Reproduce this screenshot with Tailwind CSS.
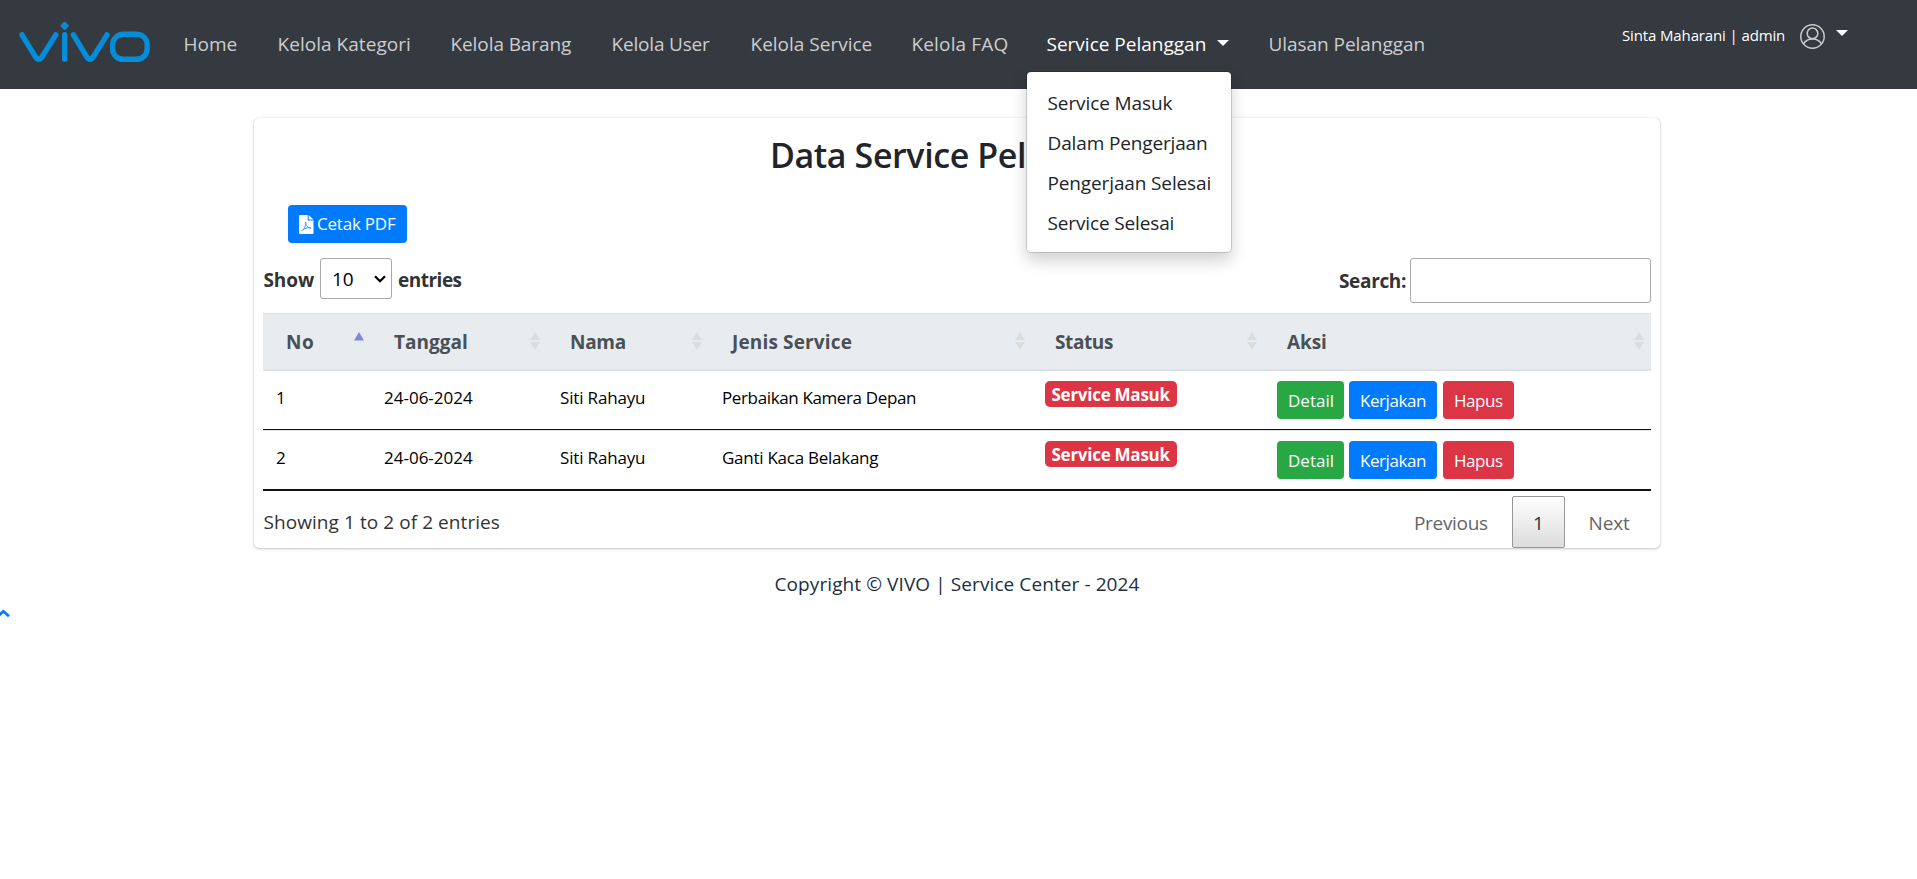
<!DOCTYPE html>
<html lang="id">
<head>
<meta charset="utf-8">
<title>Data Service Pelanggan</title>
<script src="https://cdn.jsdelivr.net/npm/@tailwindcss/browser@4"></script>
</head>
<body class="bg-white font-['Open_Sans',sans-serif] text-[19px] leading-[30px] text-[#212529] min-h-screen overflow-x-hidden">

<nav class="h-[89px] bg-[#343a40] flex items-start whitespace-nowrap">
  <svg class="w-[182px] h-[89px] shrink-0" viewBox="0 0 182 89" fill="none" stroke="#048dd9" stroke-width="5.4" stroke-linecap="round" stroke-linejoin="round">
    <path d="M22 34.8 34.6 55.4Q38.8 63.2 43 55.4L55.8 34.8"/>
    <path d="M64.7 34.8V59.3"/>
    <path d="M73.4 34.8 85.8 55.4Q90 63.2 94.2 55.4L107 34.8"/>
    <rect x="112.6" y="34.3" width="34.6" height="25" rx="10.5"/>
    <path d="M64.7 22.9 67.7 25.9 64.7 28.9 61.7 25.9Z" fill="#048dd9" stroke-width="2.2"/>
  </svg>
  <div class="flex pt-[29px] pl-[1.5px] text-[#cccdcf]">
    <a class="w-[94px]">Home</a>
    <a class="w-[173px] tracking-[0.04px]">Kelola Kategori</a>
    <a class="w-[161px] tracking-[-0.09px]">Kelola Barang</a>
    <a class="w-[139px] tracking-[-0.19px]">Kelola User</a>
    <a class="w-[161px]">Kelola Service</a>
    <a class="w-[135px] tracking-[0.15px]">Kelola FAQ</a>
    <div class="w-[222px] relative text-white">
      <a class="flex"><span class="w-[170.5px]">Service Pelanggan</span><svg class="w-3 h-1.5 mt-[11px]" viewBox="0 0 12 6"><path d="M0 0H12L6 6Z" fill="#fff"/></svg></a>
      <div class="absolute left-[-20.5px] top-[42px] w-[206px] h-[182px] z-10 rounded-[5px] border border-black/15 bg-white bg-clip-padding py-[11px] pl-[20.5px] text-[#212529] leading-[40px] shadow-[0_8px_16px_rgba(0,0,0,0.175)]">
        <a class="block tracking-[-0.1px]">Service Masuk</a>
        <a class="block tracking-[-0.14px]">Dalam Pengerjaan</a>
        <a class="block tracking-[-0.13px]">Pengerjaan Selesai</a>
        <a class="block tracking-[-0.14px]">Service Selesai</a>
      </div>
    </div>
    <a class="tracking-[-0.05px]">Ulasan Pelanggan</a>
  </div>
  <div class="ml-auto mr-[69px] pt-[24px] flex text-white">
    <span class="w-[178px] text-[15px] leading-[23px] tracking-[-0.13px]">Sinta Maharani | admin</span>
    <svg class="w-[25px] h-[25px]" viewBox="0 0 25 25" fill="none" stroke="#c9cbcd" stroke-width="1.5">
      <circle cx="12.5" cy="12.5" r="11.7"/><circle cx="12.5" cy="9.4" r="5.3"/><path d="M3.4 20Q6 14.9 12.5 14.9T21.6 20"/>
    </svg>
    <svg class="w-3 h-1.5 ml-[11px] mt-[6px]" viewBox="0 0 12 6"><path d="M0 0H12L6 6Z" fill="#fff"/></svg>
  </div>
</nav>

<main class="mx-auto mt-[29px] w-[1406px] relative left-[-1.5px] h-[430px] rounded-[5px] bg-white px-[9px] shadow-[0_0_1px_rgba(0,0,0,0.2),0_1px_3px_rgba(0,0,0,0.22)]">
  <h1 class="pt-[16px] text-center text-[34px] leading-[42px] font-semibold tracking-[-0.4px]">Data Service Pelanggan</h1>

  <button class="mt-[29px] ml-[25px] h-[38px] w-[119px] rounded-[4px] bg-[#007bff] text-white text-[17px] leading-[38px] tracking-[-0.21px] flex items-center pl-[11px]">
    <svg class="w-[14.5px] h-[19px] mr-[3.5px]" viewBox="0 0 14.5 19"><path d="M0.9 0H8.7V5.6H14.5V18.1Q14.5 19 13.6 19H0.9Q0 19 0 18.1V0.9Q0 0 0.9 0Z" fill="#fff"/><path d="M9.7 0 14.5 4.6H9.7Z" fill="#fff"/><path d="M3 15.8C5.5 14 7.2 10 6.7 7.2C6.4 10.2 8.8 12.9 12 13C9 12.3 6 12.9 3.4 15.3" fill="none" stroke="#3f99f8" stroke-width="1"/></svg>
    <span>Cetak PDF</span>
  </button>

  <div class="mt-[15px] h-[45px] flex justify-between items-start font-bold text-[#333]">
    <label class="flex">
      <span class="w-[57px] pl-[0.5px] leading-[45px] tracking-[-0.1px]">Show</span>
      <span class="w-[72px] h-[41px] rounded-[3px] border border-[#aaa] font-normal text-black leading-[41px] pl-[11px] flex"><span class="w-[42px]">10</span><svg class="w-3 h-2 mt-[16px]" viewBox="0 0 12 8" fill="none" stroke="#000" stroke-width="2.3"><path d="M1 1.2 6 6.2 11 1.2"/></svg></span>
      <span class="ml-[6px] leading-[45px] tracking-[-0.5px]">entries</span>
    </label>
    <label class="flex">
      <span class="w-[71px] leading-[47px] tracking-[-0.34px]">Search:</span>
      <input class="w-[241px] h-[45px] rounded-[3px] border border-[#aaa]">
    </label>
  </div>

  <table class="mt-[10px] w-[1388px] table-fixed border-separate border-spacing-0 text-left text-[17px] text-black">
    <colgroup><col class="w-[108px]"><col class="w-[176px]"><col class="w-[162px]"><col class="w-[323px]"><col class="w-[232px]"><col class="w-[387px]"></colgroup>
    <thead class="bg-[#e9ecef] text-[#495057] text-[19px]">
      <tr class="[&>th]:h-[58px] [&>th]:p-0 [&>th]:pl-[23px] [&>th]:pr-[7px] [&>th]:border-t [&>th]:border-b-2 [&>th]:border-[#dee2e6] [&_div]:flex [&_div]:justify-between [&_div]:items-center [&_svg]:w-[10px] [&_svg]:h-[18px] [&_svg]:mb-[2px] [&_svg]:fill-[#dcdcdc]">
        <th><div><span class="tracking-[0.5px]">No</span><svg viewBox="0 0 10 18"><path d="M5 0 10 8.5H0Z" fill="#7f85e0"/></svg></div></th>
        <th><div><span>Tanggal</span><svg viewBox="0 0 10 18"><path d="M5 0 10 8H0ZM0 10H10L5 18Z"/></svg></div></th>
        <th><div><span class="tracking-[-0.3px]">Nama</span><svg viewBox="0 0 10 18"><path d="M5 0 10 8H0ZM0 10H10L5 18Z"/></svg></div></th>
        <th><div><span class="tracking-[0.15px]">Jenis Service</span><svg viewBox="0 0 10 18"><path d="M5 0 10 8H0ZM0 10H10L5 18Z"/></svg></div></th>
        <th><div><span class="tracking-[-0.4px]">Status</span><svg viewBox="0 0 10 18"><path d="M5 0 10 8H0ZM0 10H10L5 18Z"/></svg></div></th>
        <th><div><span class="tracking-[-0.11px]">Aksi</span><svg viewBox="0 0 10 18"><path d="M5 0 10 8H0ZM0 10H10L5 18Z"/></svg></div></th>
      </tr>
    </thead>
    <tbody class="[&_td]:h-[60px] [&_td]:p-0 [&_td]:pl-[13px] [&_td]:align-top [&_td]:pt-[12px] [&_button]:h-[38px] [&_button]:rounded-[4px] [&_button]:text-white [&_button]:text-left [&_button]:pl-[11px] [&_button]:pt-px">
      <tr class="[&>td]:border-b [&>td]:border-[#111] [&>td]:h-[59px]">
        <td>1</td><td>24-06-2024</td><td class="tracking-[-0.16px]">Siti Rahayu</td><td class="tracking-[-0.37px]">Perbaikan Kamera Depan</td>
        <td><div class="-mt-[2px] w-[132px] h-[26px] rounded-[5px] bg-[#dc3545] text-white font-bold leading-[28px] pl-[6.5px] tracking-[-0.26px]">Service Masuk</div></td>
        <td><div class="-mt-[2px] flex"><button class="w-[67px] bg-[#28a745]">Detail</button><button class="w-[88px] ml-[5px] bg-[#007bff] tracking-[-0.43px]">Kerjakan</button><button class="w-[71px] ml-[6px] bg-[#dc3545] tracking-[-0.45px]">Hapus</button></div></td>
      </tr>
      <tr class="[&>td]:border-t [&>td]:border-t-[#dee2e6] [&>td]:border-b-2 [&>td]:border-b-[#111] [&>td]:h-[61px]">
        <td>2</td><td>24-06-2024</td><td class="tracking-[-0.16px]">Siti Rahayu</td><td class="tracking-[-0.26px]">Ganti Kaca Belakang</td>
        <td><div class="-mt-[2px] w-[132px] h-[26px] rounded-[5px] bg-[#dc3545] text-white font-bold leading-[28px] pl-[6.5px] tracking-[-0.26px]">Service Masuk</div></td>
        <td><div class="-mt-[2px] flex"><button class="w-[67px] bg-[#28a745]">Detail</button><button class="w-[88px] ml-[5px] bg-[#007bff] tracking-[-0.43px]">Kerjakan</button><button class="w-[71px] ml-[6px] bg-[#dc3545] tracking-[-0.45px]">Hapus</button></div></td>
      </tr>
    </tbody>
  </table>

  <div class="mt-[5px] h-[52px] flex justify-between leading-[52px] text-[#333]">
    <span class="pl-[0.5px] tracking-[0.07px]">Showing 1 to 2 of 2 entries</span>
    <div class="flex text-[#666]">
      <span class="w-[98px] leading-[54px] tracking-[-0.32px]">Previous</span>
      <span class="w-[53px] h-[52px] rounded-[2px] border border-[#979797] bg-linear-to-b from-white to-[#dcdcdc] text-[#333] text-center leading-[52px]">1</span>
      <span class="w-[86px] pl-[23.5px] leading-[54px] tracking-[-0.14px]">Next</span>
    </div>
  </div>
</main>

<footer class="mt-[21px] text-center text-[#212f3f] tracking-[0.09px] relative left-[-1.5px]">Copyright © VIVO | Service Center - 2024</footer>
<svg class="mt-[10px] w-[12px] h-[10px]" viewBox="0 0 12 10" fill="none" stroke="#007bff" stroke-width="2.8"><path d="M-3 8 3.3 2.3 9 7.3"/></svg>

</body>
</html>
